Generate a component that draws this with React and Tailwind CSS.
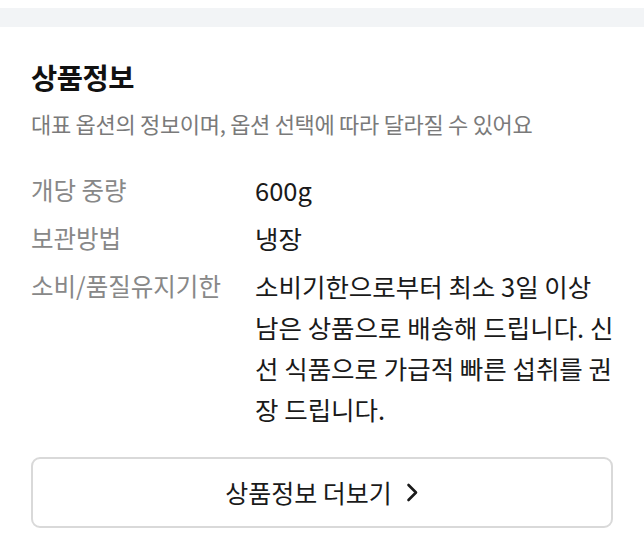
export default function App() {
  const font = { fontFamily: '"Noto Sans CJK KR", "Noto Sans", sans-serif' };
  return (
    <div className="w-[644px] h-[552px] bg-white overflow-hidden" style={font}>
      <div className="h-[8px] bg-white" />
      <div className="h-[19px] bg-[#f2f4f6]" />
      <div className="px-[31px] pt-[31px]">
        <h2 className="text-[28.5px] leading-[38px] font-bold text-[#111111] tracking-[-0.5px]">상품정보</h2>
        <p className="mt-[12px] text-[22px] leading-[30px] text-[#7a7a7a] tracking-[-0.3px]">
          대표 옵션의 정보이며, 옵션 선택에 따라 달라질 수 있어요
        </p>
        <div className="mt-[31px] flex flex-col gap-[7px] text-[24.5px] leading-[41px]">
          <div className="flex">
            <div className="w-[224px] shrink-0 text-[#888888]">개당 중량</div>
            <div className="text-[#1a1a1a] text-[25.5px]">600g</div>
          </div>
          <div className="flex">
            <div className="w-[224px] shrink-0 text-[#888888]">보관방법</div>
            <div className="text-[#1a1a1a] text-[25.5px]">냉장</div>
          </div>
          <div className="flex">
            <div className="w-[224px] shrink-0 text-[#888888] whitespace-nowrap">소비/품질유지기한</div>
            <div className="text-[#1a1a1a] text-[25.5px] whitespace-nowrap">
              <div>소비기한으로부터 최소 3일 이상</div>
              <div>남은 상품으로 배송해 드립니다. 신</div>
              <div>선 식품으로 가급적 빠른 섭취를 권</div>
              <div>장 드립니다.</div>
            </div>
          </div>
        </div>
        <button className="mt-[28px] w-full h-[71px] rounded-[9px] border-2 border-[#d9d9d9] bg-white flex items-center justify-center gap-[14px] text-[25px] text-[#1a1a1a]">
          <span>상품정보 더보기</span>
          <svg width="13" height="19" viewBox="0 0 13 19" fill="none">
            <path d="M2.5 2 L10 9.5 L2.5 17" stroke="#1a1a1a" strokeWidth="2.6" strokeLinecap="round" strokeLinejoin="round" />
          </svg>
        </button>
      </div>
    </div>
  );
}
